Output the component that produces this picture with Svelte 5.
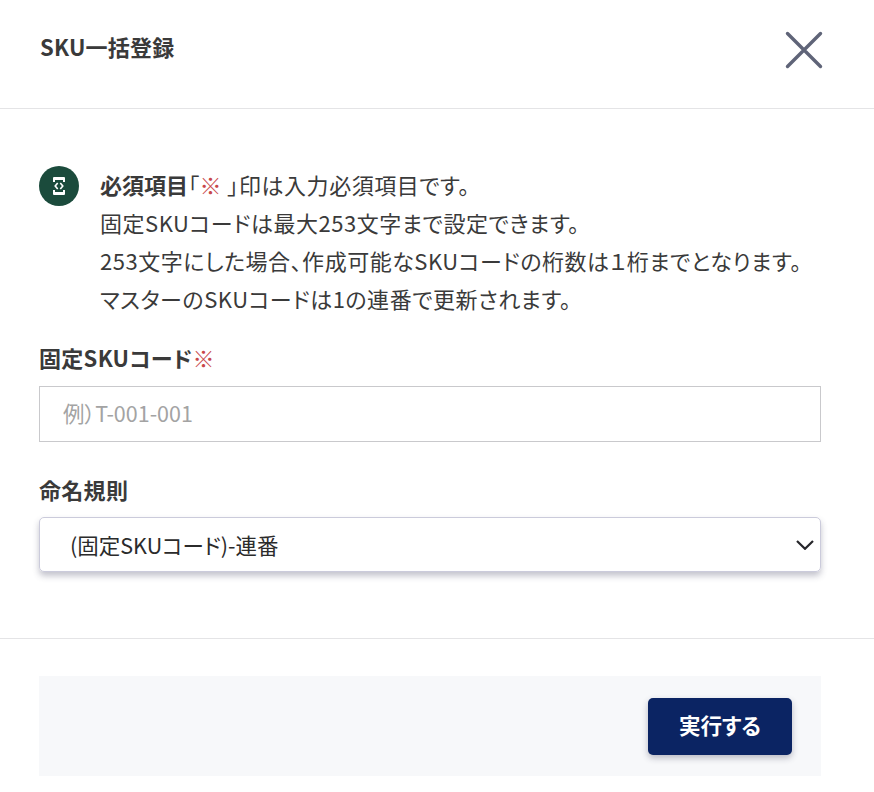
<script>
  const notes = [
    "固定SKUコードは最大253文字まで設定できます。",
    "253文字にした場合、作成可能なSKUコードの桁数は１桁までとなります。",
    "マスターのSKUコードは1の連番で更新されます。"
  ];
</script>

<div class="modal">
  <header class="head">
    <h2>SKU一括登録</h2>
    <button class="close" aria-label="閉じる">
      <svg width="38" height="38" viewBox="0 0 38 38">
        <path d="M2.500 2.500 L35.500 35.500 M35.500 2.500 L2.500 35.500" stroke="#5f6478" stroke-width="3.400" stroke-linecap="round" fill="none" />
      </svg>
    </button>
  </header>

  <div class="body">
    <div class="notice">
      <span class="badge">
        <svg width="14" height="20" viewBox="0 0 14 20">
          <path d="M1 6 V2 Q1 1 2 1 H12 Q13 1 13 2 V6 H11 V4 H3 V6 Z M1 14 V18 Q1 19 2 19 H12 Q13 19 13 18 V14 H11 V16 H3 V14 Z" fill="#fff" />
          <path d="M5.700 7 L3.200 10 L5.700 13 M8.300 7 L10.800 10 L8.300 13" stroke="#fff" stroke-width="1.600" fill="none" />
        </svg>
      </span>
      <div class="text">
        <p><strong>必須項目</strong>「<span class="req">※</span> 」印は入力必須項目です。</p>
        {#each notes as line}
          <p>{line}</p>
        {/each}
      </div>
    </div>

    <div class="field first">
      <label for="sku">固定SKUコード<span class="req">※</span></label>
      <input id="sku" type="text" placeholder="例）T-001-001" />
    </div>

    <div class="field second">
      <label for="rule">命名規則</label>
      <div class="select" id="rule">
        <span>(固定SKUコード)-連番</span>
        <svg width="18" height="10" viewBox="0 0 18 10">
          <path d="M1 1 L9 8.800 L17 1" stroke="#26262b" stroke-width="2.200" fill="none" />
        </svg>
      </div>
    </div>
  </div>

  <footer class="foot">
    <div class="actions">
      <button class="run">実行する</button>
    </div>
  </footer>
</div>

<style>
  :global(body) {
    margin: 0;
    background: #fff;
  }

  .modal {
    width: 874px;
    height: 792px;
    color: #3a3a3a;
    font-family: "Noto Sans CJK JP", "Noto Sans", sans-serif;
    font-size: 22px;
    font-feature-settings: "palt";
    overflow: hidden;
  }

  .head {
    height: 109px;
    box-sizing: border-box;
    border-bottom: 1px solid #e4e4e6;
    padding: 0 51px 8px 40px;
    display: flex;
    align-items: center;
    justify-content: space-between;
  }

  h2 {
    margin: 0 0 8px;
    font-size: 22px;
    font-weight: 700;
    letter-spacing: 0.25px;
  }

  .close {
    padding: 0;
    border: none;
    background: none;
    display: flex;
  }

  .body {
    padding: 57px 53px 0 39px;
    height: 530px;
    box-sizing: border-box;
    border-bottom: 1px solid #e4e4e6;
    width: 874px;
  }

  .notice {
    display: flex;
    gap: 21px;
  }

  .badge {
    width: 40px;
    height: 40px;
    border-radius: 50%;
    background: #1b4b3c;
    display: flex;
    align-items: center;
    justify-content: center;
    flex-shrink: 0;
  }

  .text {
    margin-top: -1px;
  }

  p {
    margin: 0;
    line-height: 38px;
    letter-spacing: 0.52px;
    white-space: nowrap;
  }

  strong {
    letter-spacing: 0;
  }

  .req {
    color: #c8474a;
  }

  .field {
    display: flex;
    flex-direction: column;
  }

  .first {
    margin-top: 25px;
  }

  .second {
    margin-top: 32px;
  }

  label {
    font-weight: 700;
    font-size: 22px;
    line-height: 30px;
    letter-spacing: 0.3px;
    margin-bottom: 13px;
  }

  .first label {
    margin-bottom: 14px;
  }

  label .req {
    font-weight: 400;
  }

  input {
    width: 782px;
    height: 56px;
    box-sizing: border-box;
    border: 1px solid #c9c9cc;
    padding: 0 23px 4px;
    font-family: inherit;
    font-feature-settings: inherit;
    font-size: 21.5px;
    outline: none;
    background: #fff;
  }

  input::placeholder {
    color: #a3a3a3;
    opacity: 1;
  }

  .select {
    width: 782px;
    height: 55px;
    box-sizing: border-box;
    border: 1px solid #cbcbdb;
    border-radius: 5px;
    padding: 0 6px 0 30px;
    display: flex;
    align-items: center;
    justify-content: space-between;
    box-shadow: 0 4px 6px rgba(60, 60, 90, 0.3);
    color: #2b2b2b;
    font-size: 21.5px;
  }

  .foot {
    padding: 37px 0 0 39px;
  }

  .actions {
    width: 782px;
    height: 100px;
    background: #f7f8fa;
    display: flex;
    align-items: center;
    justify-content: flex-end;
    padding-right: 29px;
    box-sizing: border-box;
  }

  .run {
    width: 144px;
    height: 57px;
    border: none;
    border-radius: 5px;
    padding: 0 0 3px;
    background: #0b2463;
    color: #fff;
    font-family: inherit;
    font-feature-settings: inherit;
    font-size: 21.5px;
    font-weight: 700;
    box-shadow: 0 3px 6px rgba(40, 40, 70, 0.3);
  }
</style>
